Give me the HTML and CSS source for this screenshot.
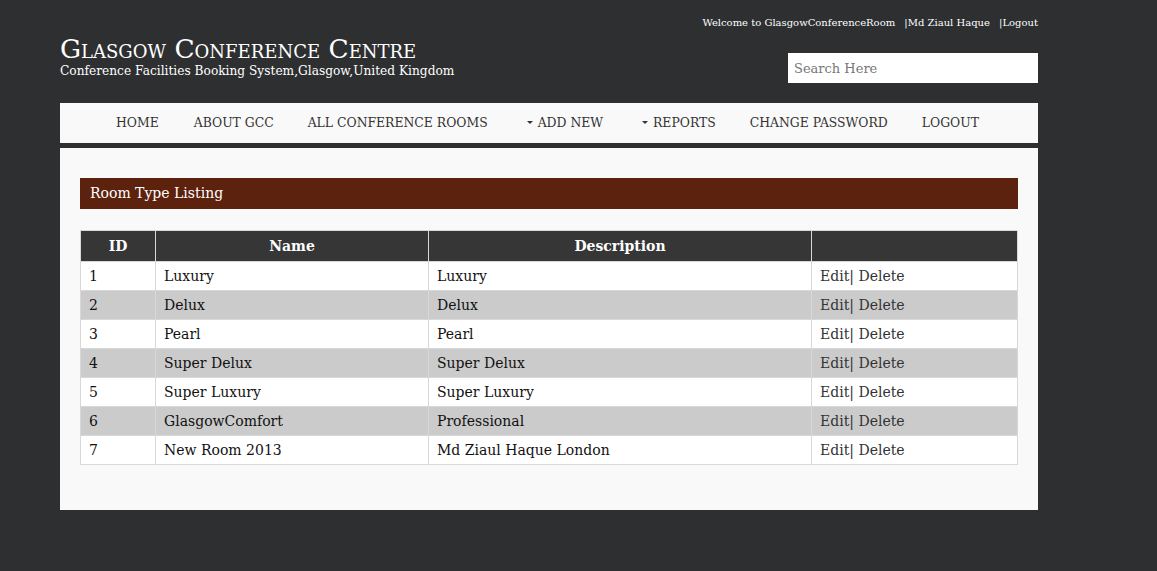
FILE: index.html
```html
<!DOCTYPE html>
<html>
<head>
<meta charset="utf-8">
<title>Room Type Listing</title>
<link rel="stylesheet" href="styles.css">
</head>
<body>
<div class="page">
  <header class="header">
    <div class="brand">
      <div class="title">Glasgow Conference Centre</div>
      <div class="subtitle">Conference Facilities Booking System,Glasgow,United Kingdom</div>
    </div>
    <div class="side">
      <div class="welcome">Welcome to GlasgowConferenceRoom <span class="sep">|</span>Md Ziaul Haque <span class="sep">|</span>Logout</div>
      <input class="search" type="text" placeholder="Search Here">
    </div>
  </header>
  <nav class="nav">
    <a class="nav-item">HOME</a>
    <a class="nav-item">ABOUT GCC</a>
    <a class="nav-item">ALL CONFERENCE ROOMS</a>
    <a class="nav-item drop"><span class="caret"></span>ADD NEW</a>
    <a class="nav-item drop"><span class="caret"></span>REPORTS</a>
    <a class="nav-item">CHANGE PASSWORD</a>
    <a class="nav-item">LOGOUT</a>
  </nav>
  <main class="panel">
    <h2 class="panel-title">Room Type Listing</h2>
    <table class="grid">
      <thead>
        <tr><th class="c-id">ID</th><th class="c-name">Name</th><th class="c-desc">Description</th><th class="c-act"></th></tr>
      </thead>
      <tbody>
        <tr><td>1</td><td>Luxury</td><td>Luxury</td><td class="act">Edit| Delete</td></tr>
        <tr class="alt"><td>2</td><td>Delux</td><td>Delux</td><td class="act">Edit| Delete</td></tr>
        <tr><td>3</td><td>Pearl</td><td>Pearl</td><td class="act">Edit| Delete</td></tr>
        <tr class="alt"><td>4</td><td>Super Delux</td><td>Super Delux</td><td class="act">Edit| Delete</td></tr>
        <tr><td>5</td><td>Super Luxury</td><td>Super Luxury</td><td class="act">Edit| Delete</td></tr>
        <tr class="alt"><td>6</td><td>GlasgowComfort</td><td>Professional</td><td class="act">Edit| Delete</td></tr>
        <tr><td>7</td><td>New Room 2013</td><td>Md Ziaul Haque London</td><td class="act">Edit| Delete</td></tr>
      </tbody>
    </table>
  </main>
</div>
</body>
</html>
```
FILE: styles.css
```css
html, body {
  margin: 0;
  padding: 0;
}
body {
  background: #2e2f31;
  font-family: "DejaVu Serif", Georgia, serif;
  color: #111;
}
.page {
  width: 978px;
  margin-left: 60px;
}
.header {
  display: flex;
  justify-content: space-between;
  height: 103px;
}
.brand {
  padding-top: 34px;
}
.title {
  font-variant: small-caps;
  font-size: 26.4px;
  line-height: 29px;
  color: #fff;
  letter-spacing: 0;
}
.subtitle {
  margin-top: 1px;
  font-size: 12.2px;
  line-height: 15px;
  color: #fff;
}
.side {
  display: flex;
  flex-direction: column;
  align-items: flex-end;
  padding-top: 16px;
}
.welcome {
  font-size: 10px;
  line-height: 14px;
  color: #fff;
  white-space: pre;
}
.sep {
  margin-left: 6px;
}
.search {
  margin-top: 23px;
  width: 250px;
  height: 30px;
  box-sizing: border-box;
  border: 0;
  padding: 0 6px;
  font-family: inherit;
  font-size: 13px;
  background: #fff;
  outline: none;
}
.search::placeholder {
  color: #777;
}
.nav {
  height: 40px;
  background: #f9f9f9;
  display: flex;
  align-items: center;
  padding-left: 56px;
  padding-bottom: 2px;
  box-sizing: border-box;
}
.nav-item {
  font-size: 12.4px;
  color: #333;
  margin-right: 34px;
  display: flex;
  align-items: center;
}
.nav-item:first-child {
  margin-right: 35px;
}
.nav-item.drop {
  margin-left: 5px;
}
.caret {
  display: inline-block;
  width: 0;
  height: 0;
  border-left: 3px solid transparent;
  border-right: 3px solid transparent;
  border-top: 3px solid #333;
  margin-right: 5px;
}
.panel {
  margin-top: 5px;
  background: #f9f9f9;
  padding: 30px 20px 45px;
}
.panel-title {
  margin: 0 0 21px;
  height: 31px;
  line-height: 31px;
  background: #5c220d;
  color: #fff;
  font-weight: normal;
  font-size: 14px;
  padding-left: 10px;
}
.grid {
  width: 100%;
  border-collapse: collapse;
  table-layout: fixed;
  font-size: 14px;
}
.grid th {
  background: #363636;
  color: #fff;
  font-weight: bold;
  height: 30px;
  padding: 0;
  border: 1px solid #d8d8d8;
  text-align: center;
}
.grid td {
  height: 28px;
  padding: 0 8px;
  border: 1px solid #d8d8d8;
  background: #fff;
}
.grid tr.alt td {
  background: #cbcbcb;
}
.c-id { width: 74px; }
.c-name { width: 272px; }
.c-desc { width: 382px; }
.act { color: #333; }
```
